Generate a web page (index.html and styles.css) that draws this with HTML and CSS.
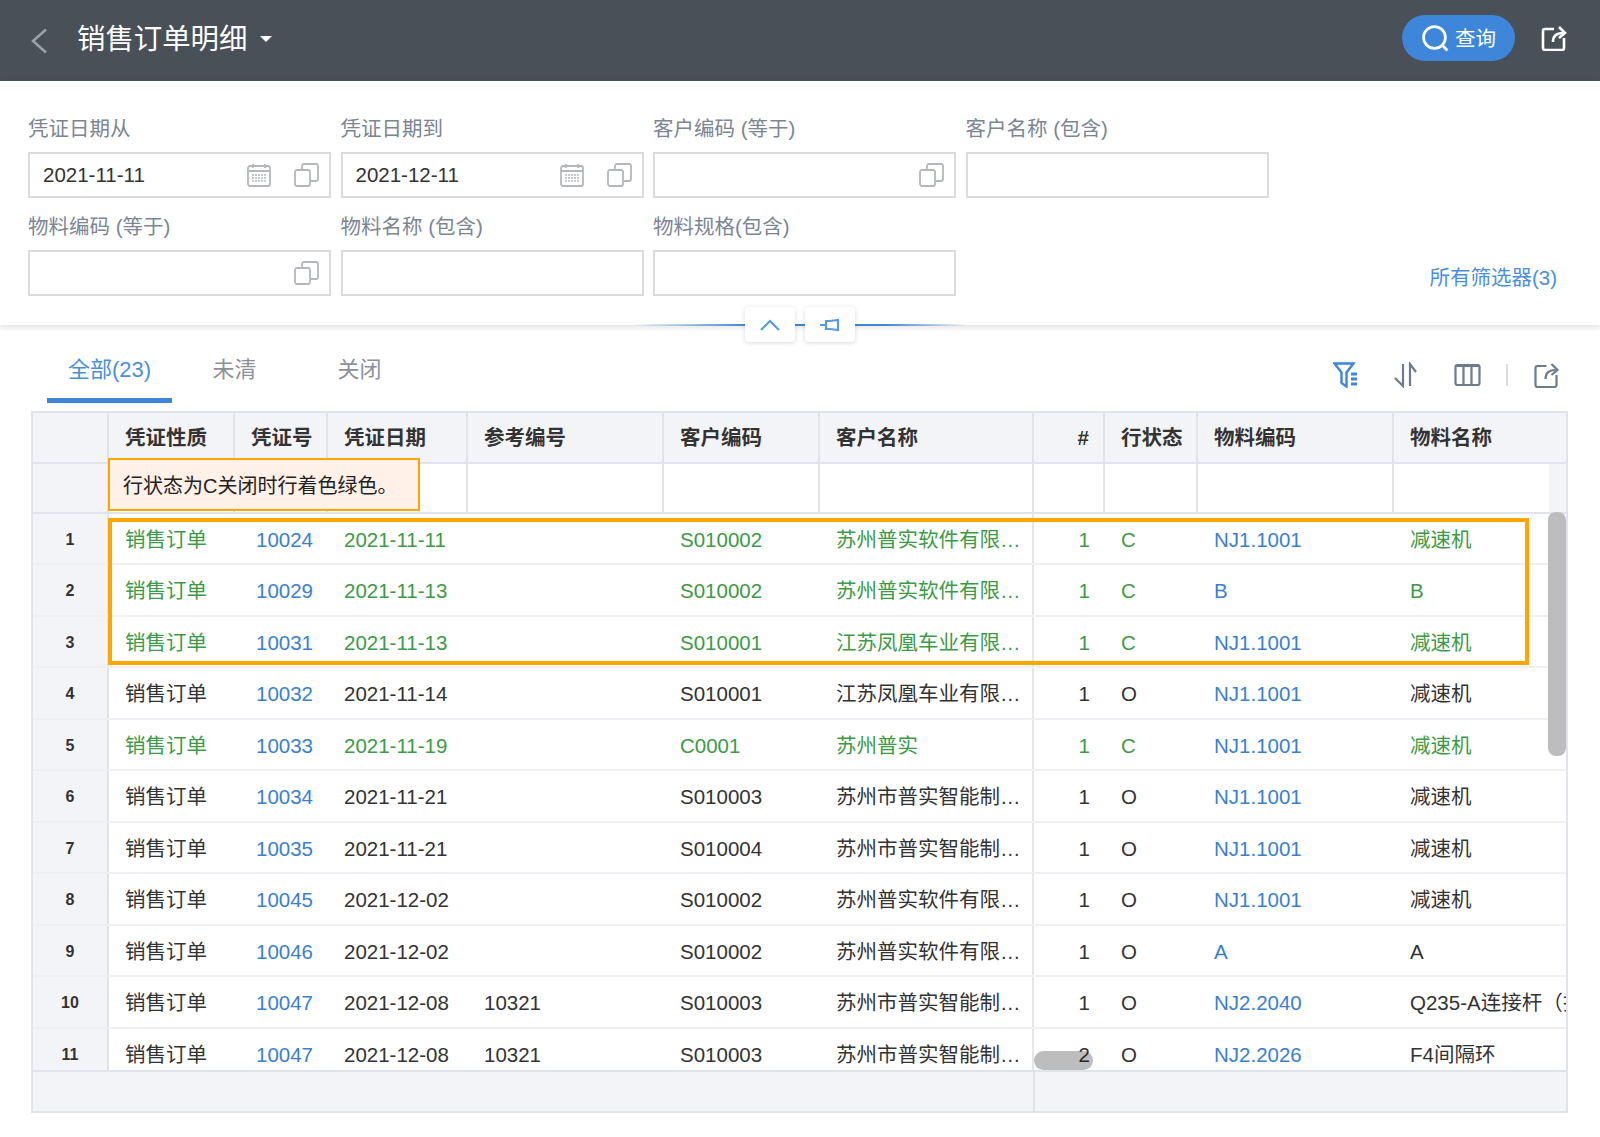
FILE: index.html
```html
<!DOCTYPE html>
<html lang="zh-CN">
<head>
<meta charset="utf-8">
<title>销售订单明细</title>
<link rel="stylesheet" href="styles.css">
</head>
<body>
<header class="topbar">
  <svg class="back" viewBox="0 0 18 26"><path d="M16 1.5 3 13l13 11.5"/></svg>
  <h1 class="title">销售订单明细</h1>
  <span class="caret"></span>
  <button class="query">
    <svg class="query-icon" viewBox="0 0 26 26"><circle cx="12" cy="12" r="10.5"/><path d="m19.5 19.5 5 5"/></svg>
    查询
  </button>
  <svg class="export-top" viewBox="0 0 26 26"><path d="M13 4H4a2 2 0 0 0-2 2v17a2 2 0 0 0 2 2h17a2 2 0 0 0 2-2V13"/><path d="M12 17c0-6 3-9 10-9"/><path d="m18 2 6 6-6 5"/></svg>
</header>

<section class="filters">
  <div class="field"><label class="label">凭证日期从</label><div class="box"><span class="val">2021-11-11</span>
    <svg class="ico cal" viewBox="0 0 24 24"><rect x="1" y="3" width="22" height="20" rx="2"/><path d="M1 8h22M6 1v4M18 1v4"/><path class="dots" d="M5 12h14M5 15h14M5 18h14"/></svg>
    <svg class="ico copy" viewBox="0 0 25 24"><rect x="1" y="7" width="15" height="16" rx="2"/><path d="M8 7V3a2 2 0 0 1 2-2h12a2 2 0 0 1 2 2v13a2 2 0 0 1-2 2h-6"/></svg></div></div>
  <div class="field"><label class="label">凭证日期到</label><div class="box"><span class="val">2021-12-11</span>
    <svg class="ico cal" viewBox="0 0 24 24"><rect x="1" y="3" width="22" height="20" rx="2"/><path d="M1 8h22M6 1v4M18 1v4"/><path class="dots" d="M5 12h14M5 15h14M5 18h14"/></svg>
    <svg class="ico copy" viewBox="0 0 25 24"><rect x="1" y="7" width="15" height="16" rx="2"/><path d="M8 7V3a2 2 0 0 1 2-2h12a2 2 0 0 1 2 2v13a2 2 0 0 1-2 2h-6"/></svg></div></div>
  <div class="field"><label class="label">客户编码 (等于)</label><div class="box">
    <svg class="ico copy" viewBox="0 0 25 24"><rect x="1" y="7" width="15" height="16" rx="2"/><path d="M8 7V3a2 2 0 0 1 2-2h12a2 2 0 0 1 2 2v13a2 2 0 0 1-2 2h-6"/></svg></div></div>
  <div class="field"><label class="label">客户名称 (包含)</label><div class="box"></div></div>
  <div class="field new-row"><label class="label">物料编码 (等于)</label><div class="box">
    <svg class="ico copy" viewBox="0 0 25 24"><rect x="1" y="7" width="15" height="16" rx="2"/><path d="M8 7V3a2 2 0 0 1 2-2h12a2 2 0 0 1 2 2v13a2 2 0 0 1-2 2h-6"/></svg></div></div>
  <div class="field"><label class="label">物料名称 (包含)</label><div class="box"></div></div>
  <div class="field"><label class="label">物料规格(包含)</label><div class="box"></div></div>
  <a class="all-filters">所有筛选器(3)</a>
</section>

<div class="splitter">
  <div class="split-line"></div>
  <span class="split-btn up"><svg viewBox="0 0 20 12"><path d="M1 11 10 2l9 9"/></svg></span>
  <span class="split-btn pin"><svg viewBox="0 0 20 14"><path d="M0 7h6M6 3h4l8-1v10l-8-1H6z"/></svg></span>
</div>

<section class="tabbar">
  <nav class="tabs">
    <a class="tab active">全部(23)</a>
    <a class="tab">未清</a>
    <a class="tab">关闭</a>
  </nav>
  <div class="tools">
    <svg class="tool blue" viewBox="0 0 27 26"><path d="M1.500 1.500h19l-7 9v14l-5-3.500V10.500z"/><path d="M18 12h6M18 17h6M18 22h6" class="thick"/></svg>
    <svg class="tool" viewBox="0 0 27 26"><path d="M11 2v22L3 16M18 24V2l6 8"/></svg>
    <svg class="tool" viewBox="0 0 27 26"><rect x="1.500" y="3" width="24" height="20" rx="2"/><path d="M9.500 3v20M17.500 3v20M1.500 4h24"/></svg>
    <span class="tool-sep"></span>
    <svg class="tool" viewBox="0 0 26 26"><path d="M13 4H4a2 2 0 0 0-2 2v17a2 2 0 0 0 2 2h17a2 2 0 0 0 2-2V13"/><path d="M12 17c0-6 3-9 10-9"/><path d="m18 2 6 6-6 5"/></svg>
  </div>
</section>

<section class="table">
  <div class="scroll">
    <div class="row head">
      <div class="idx"></div><div>凭证性质</div><div>凭证号</div><div>凭证日期</div><div>参考编号</div><div>客户编码</div><div>客户名称</div><div class="num">#</div><div>行状态</div><div>物料编码</div><div>物料名称</div>
    </div>
    <div class="row search">
      <div class="idx"></div><div></div><div></div><div></div><div></div><div></div><div></div><div></div><div></div><div></div><div></div>
    </div>
    <div class="row closed"><div class="idx">1</div><div>销售订单</div><div class="num link">10024</div><div>2021-11-11</div><div></div><div>S010002</div><div class="split">苏州普实软件有限公司</div><div class="num">1</div><div>C</div><div class="link">NJ1.1001</div><div>减速机</div></div>
    <div class="row closed"><div class="idx">2</div><div>销售订单</div><div class="num link">10029</div><div>2021-11-13</div><div></div><div>S010002</div><div class="split">苏州普实软件有限公司</div><div class="num">1</div><div>C</div><div class="link">B</div><div>B</div></div>
    <div class="row closed"><div class="idx">3</div><div>销售订单</div><div class="num link">10031</div><div>2021-11-13</div><div></div><div>S010001</div><div class="split">江苏凤凰车业有限公司</div><div class="num">1</div><div>C</div><div class="link">NJ1.1001</div><div>减速机</div></div>
    <div class="row"><div class="idx">4</div><div>销售订单</div><div class="num link">10032</div><div>2021-11-14</div><div></div><div>S010001</div><div class="split">江苏凤凰车业有限公司</div><div class="num">1</div><div>O</div><div class="link">NJ1.1001</div><div>减速机</div></div>
    <div class="row closed"><div class="idx">5</div><div>销售订单</div><div class="num link">10033</div><div>2021-11-19</div><div></div><div>C0001</div><div class="split">苏州普实</div><div class="num">1</div><div>C</div><div class="link">NJ1.1001</div><div>减速机</div></div>
    <div class="row"><div class="idx">6</div><div>销售订单</div><div class="num link">10034</div><div>2021-11-21</div><div></div><div>S010003</div><div class="split">苏州市普实智能制造有限公司</div><div class="num">1</div><div>O</div><div class="link">NJ1.1001</div><div>减速机</div></div>
    <div class="row"><div class="idx">7</div><div>销售订单</div><div class="num link">10035</div><div>2021-11-21</div><div></div><div>S010004</div><div class="split">苏州市普实智能制造有限公司</div><div class="num">1</div><div>O</div><div class="link">NJ1.1001</div><div>减速机</div></div>
    <div class="row"><div class="idx">8</div><div>销售订单</div><div class="num link">10045</div><div>2021-12-02</div><div></div><div>S010002</div><div class="split">苏州普实软件有限公司</div><div class="num">1</div><div>O</div><div class="link">NJ1.1001</div><div>减速机</div></div>
    <div class="row"><div class="idx">9</div><div>销售订单</div><div class="num link">10046</div><div>2021-12-02</div><div></div><div>S010002</div><div class="split">苏州普实软件有限公司</div><div class="num">1</div><div>O</div><div class="link">A</div><div>A</div></div>
    <div class="row"><div class="idx">10</div><div>销售订单</div><div class="num link">10047</div><div>2021-12-08</div><div>10321</div><div>S010003</div><div class="split">苏州市普实智能制造有限公司</div><div class="num">1</div><div>O</div><div class="link">NJ2.2040</div><div class="clip">Q235-A连接杆（拉杆）</div></div>
    <div class="row"><div class="idx">11</div><div>销售订单</div><div class="num link">10047</div><div>2021-12-08</div><div>10321</div><div>S010003</div><div class="split">苏州市普实智能制造有限公司</div><div class="num">2</div><div>O</div><div class="link">NJ2.2026</div><div>F4间隔环</div></div>
  </div>
  <div class="table-foot"><div class="foot-left"></div></div>
  <div class="hl"></div>
  <div class="tip">行状态为C关闭时行着色绿色。</div>
  <div class="vbar"></div>
  <div class="hbar"></div>
</section>
</body>
</html>
```
FILE: styles.css
```css
* { box-sizing: border-box; }
html, body { margin: 0; padding: 0; }
body {
  width: 1600px;
  height: 1137px;
  overflow: hidden;
  background: #fff;
  font-family: "Liberation Sans", "Noto Sans CJK SC", sans-serif;
  font-size: 20.500px;
  color: #333;
}

/* top bar */
.topbar {
  height: 81px;
  background: #4a5058;
  display: flex;
  align-items: center;
  padding: 0 33px 0 30px;
}
.back { width: 18px; height: 26px; fill: none; stroke: #9ca2a8; stroke-width: 2.500; }
.title { margin: 0 0 0 29px; font-size: 28.400px; font-weight: 400; color: #fff; line-height: 40px; position: relative; top: -2px; }
.caret { margin-left: 13px; width: 0; height: 0; border: 6px solid transparent; border-top-color: #fff; border-bottom-width: 0; position: relative; top: -2px; }
.query {
  margin-left: auto;
  width: 113px;
  height: 46px;
  margin-top: -5px;
  border: 0;
  border-radius: 23px;
  background: #3d86d9;
  color: #fff;
  font: inherit;
  font-size: 20.500px;
  display: flex;
  align-items: center;
  padding: 0 0 2px 20px;
  gap: 6px;
}
.query-icon { width: 27px; height: 27px; fill: none; stroke: #fff; stroke-width: 2.600; flex: none; position: relative; top: 1px; }
.export-top { width: 26px; height: 26px; margin: -5px 0 0 26px; fill: none; stroke: #fff; stroke-width: 2.600; }

/* filters */
.filters {
  height: 244px;
  padding: 34px 43px 0 28px;
  display: grid;
  grid-template-columns: repeat(4, 303px) 1fr;
  grid-template-rows: 84px 84px;
  column-gap: 9.500px;
  row-gap: 14px;
  box-shadow: 0 2px 6px rgba(0, 0, 0, .13);
  position: relative;
}
.new-row { grid-column: 1; }
.label { display: block; height: 28px; line-height: 28px; color: #7b8694; margin-bottom: 9px; white-space: nowrap; }
.box {
  height: 46px;
  border: 2px solid #dcdcdc;
  display: flex;
  align-items: center;
  justify-content: flex-end;
  padding: 0 10px 0 13px;
  gap: 23px;
}
.val { margin-right: auto; color: #333; }
.ico { fill: none; stroke: #b4b8bd; stroke-width: 1.800; flex: none; }
.ico .dots { stroke-width: 1.600; stroke-dasharray: 2 1; }
.cal { width: 24px; height: 24px; }
.copy { width: 25px; height: 24px; }
.all-filters {
  grid-column: 4 / 6;
  grid-row: 2;
  justify-self: end;
  align-self: end;
  color: #4a8fdc;
  line-height: 28px;
  margin-bottom: 5px;
}

/* splitter */
.splitter { height: 0; position: relative; z-index: 2; }
.split-line {
  position: absolute;
  left: 632px;
  top: -1px;
  width: 336px;
  height: 2px;
  background: linear-gradient(to right, rgba(61, 134, 217, 0), #3d86d9 35%, #3d86d9 75%, rgba(61, 134, 217, 0));
}
.split-btn {
  position: absolute;
  top: -18px;
  width: 50px;
  height: 35px;
  background: #fff;
  border-radius: 4px;
  box-shadow: 0 1px 5px rgba(0, 0, 0, .14);
  display: flex;
  align-items: center;
  justify-content: center;
}
.split-btn.up { left: 745px; }
.split-btn.pin { left: 805px; }
.split-btn svg { fill: none; stroke: #5b9ae2; stroke-width: 2.200; }
.up svg { width: 20px; height: 12px; }
.pin svg { width: 20px; height: 14px; }

/* tabs */
.tabbar { display: flex; padding: 26px 40px 0 47px; height: 86px; }
.tabs { display: flex; }
.tab {
  width: 125px;
  height: 52px;
  line-height: 37px;
  text-align: center;
  font-size: 22px;
  color: #8d9197;
}
.tab.active { color: #4a8fdc; border-bottom: 5px solid #3d86d9; }
.tools { margin-left: auto; display: flex; align-items: center; gap: 35px; height: 26px; margin-top: 11px; }
.tool { width: 27px; height: 26px; fill: none; stroke: #6d7b8c; stroke-width: 2.200; flex: none; }
.tool.blue { stroke: #3d86d9; stroke-width: 2.400; margin-right: -3px; }
.tool .thick { stroke-width: 2.800; }
.tool-sep { width: 2px; height: 22px; background: #d9dce0; margin: 0 -10px 0 -10px; }

/* table */
.table {
  position: relative;
  width: 1537px;
  height: 702px;
  margin-left: 31px;
  border: 2px solid #e0e3ea;
  display: flex;
  flex-direction: column;
}
.scroll { height: 659px; overflow: hidden; flex: none; }
.row {
  display: grid;
  grid-template-columns: 76px 126px 93px 140px 196px 156px 214px 71px 93px 196px 172px;
  height: 51.500px;
  border-bottom: 2px solid #eef0f3;
}
.row > div {
  padding: 0 15px 0 16px;
  line-height: 51.500px;
  white-space: nowrap;
  overflow: hidden;
  text-overflow: ellipsis;
}
.row > .clip { text-overflow: clip; padding-right: 0; }
.row > .num { text-align: right; }
.row > .idx {
  background: #f3f4f8;
  border-right: 2px solid #e0e3ea;
  padding: 0;
  text-align: center;
  font-size: 16px;
  font-weight: 700;
  color: #333;
}
.row > .split { border-right: 2px solid #e4e7ed; padding-right: 10px; }
.link { color: #3b7fd0; }
.closed { color: #3d9a46; }
.closed .link { color: #3b7fd0; }
.closed .idx { color: #333; }

.head { height: 51px; background: #f3f4f8; border-bottom: 2px solid #e0e3ea; font-weight: 700; }
.row.head > div { line-height: 50px; border-right: 2px solid #e0e3ea; padding-right: 0; text-overflow: clip; }
.row.head > div:last-child { border-right: 0; }
.row.head > .num { padding-right: 14px; }
.search { height: 49.500px; border-bottom: 2px solid #e0e3ea; background: linear-gradient(to left, #f3f4f8 17px, #fff 17px); }
.search > div { border-right: 2px solid #e0e3ea; }
.search > div:last-child { border-right: 0; }

.table-foot { flex: 1; background: #f3f4f8; border-top: 2px solid #e0e3ea; margin-top: -2px; }
.foot-left { width: 1002px; height: 100%; border-right: 2px solid #e0e3ea; }

.hl {
  position: absolute;
  left: 75px;
  top: 105px;
  width: 1421px;
  height: 147px;
  border: 4px solid #ffa500;
}
.tip {
  position: absolute;
  left: 75px;
  top: 45px;
  width: 312px;
  height: 53px;
  padding-left: 13px;
  font-size: 20px;
  line-height: 53px;
  background: #fff0e8;
  border: 2px solid #ffa500;
  color: #222;
  white-space: nowrap;
}
.vbar {
  position: absolute;
  left: 1515px;
  top: 99px;
  width: 18px;
  height: 244px;
  background: #bdbdbd;
  border-radius: 8px;
}
.hbar {
  position: absolute;
  left: 1001px;
  top: 638px;
  width: 59px;
  height: 19px;
  background: rgba(0, 0, 0, .26);
  border-radius: 10px;
}
```
